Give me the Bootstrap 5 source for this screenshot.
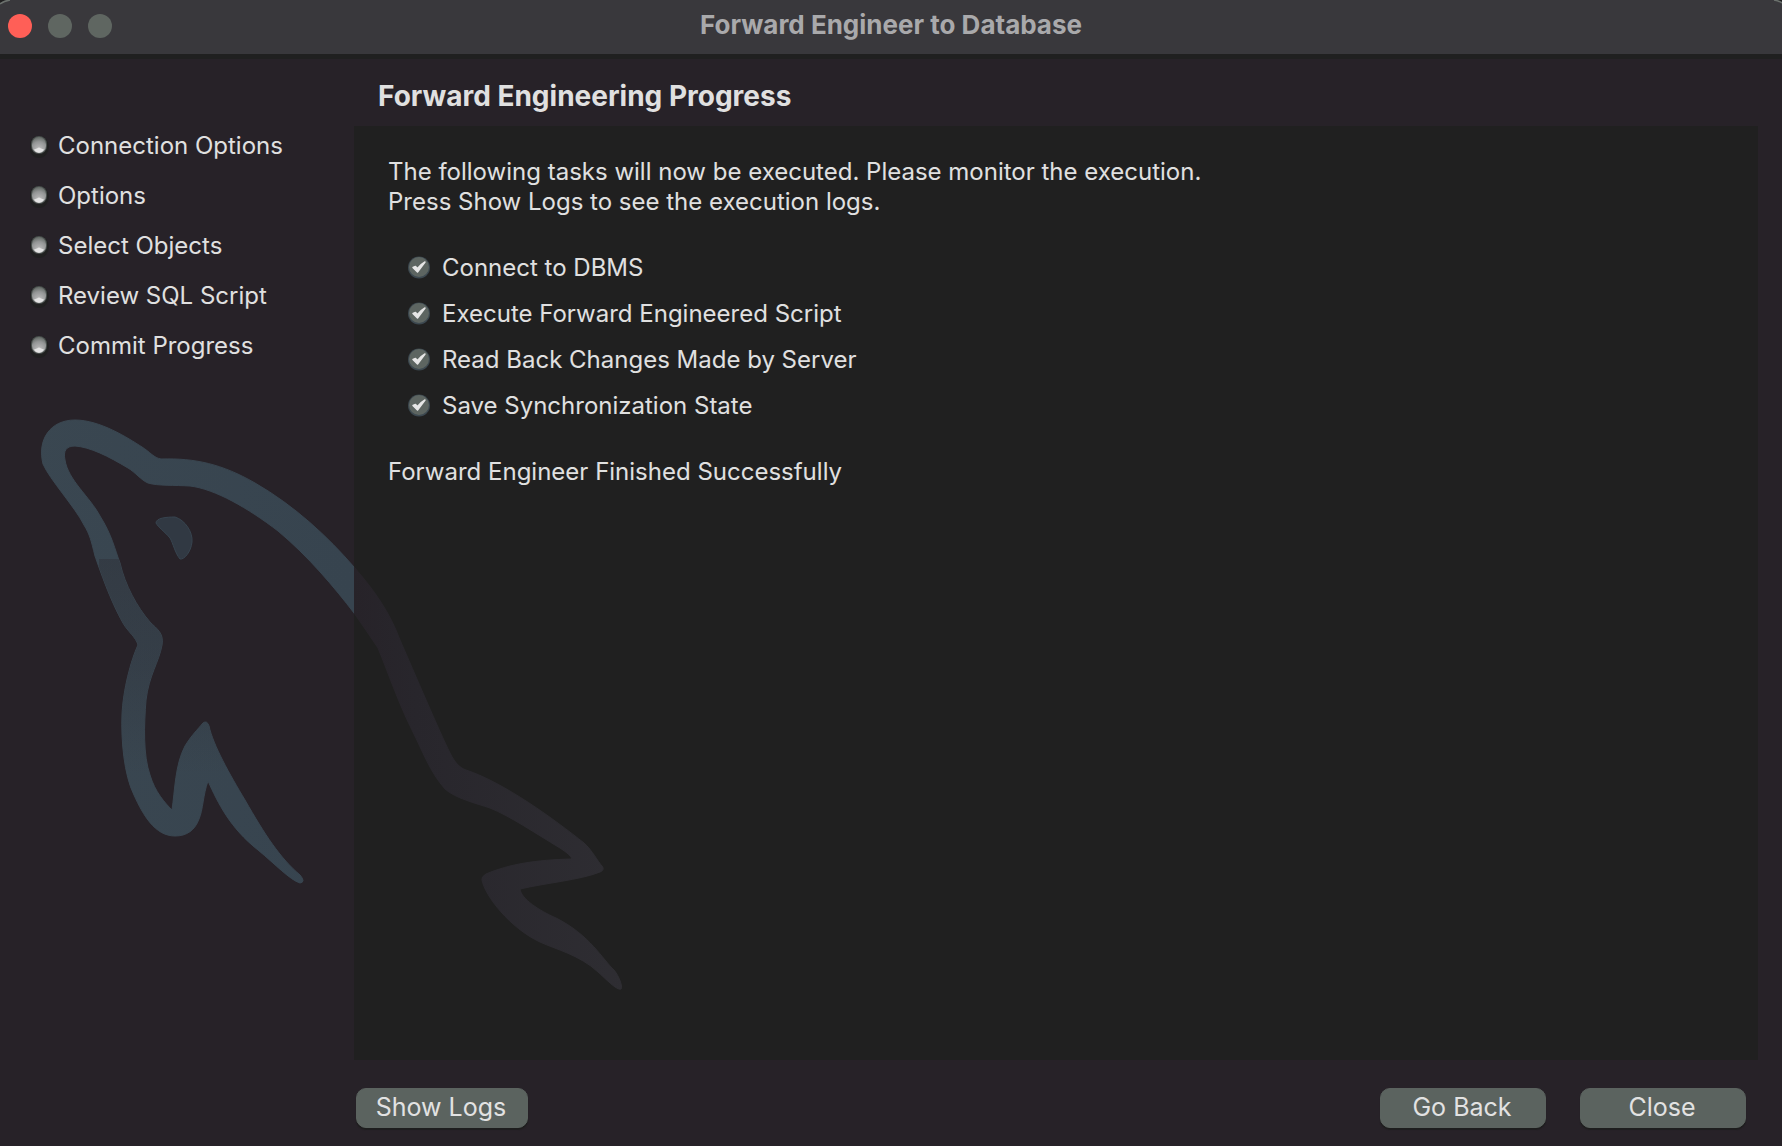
<!DOCTYPE html>
<html lang="en">
<head>
<meta charset="utf-8">
<meta name="viewport" content="width=device-width, initial-scale=1">
<title>Forward Engineer to Database</title>
<link href="https://cdn.jsdelivr.net/npm/bootstrap@5.3.0/dist/css/bootstrap.min.css" rel="stylesheet">
<style>
  body { background: #272228; color: #e0e0e0; font-family: Inter, "Liberation Sans", sans-serif; font-size: 24px; line-height: 30px; }
  .titlebar { height: 59px; background: #39383c; border-bottom: 5px solid #202020; padding: 0 8px 2px; gap: 16px; }
  .titlebar h1 { font-size: 26px; line-height: 30px; font-weight: 700; color: #a9a9ab; left: 0; right: 0; top: 10px; pointer-events: none; }
  .traffic { width: 24px; height: 24px; border: 0; padding: 0; border-radius: 50%; background: #5f6661; }
  .traffic-close { background: #ff5f57; }
  .corner { width: 12px; height: 5px; top: 0; }
  .steps { width: 354px; padding: 72px 16px 0 30px; }
  .steps ul { display: grid; gap: 20px; }
  .steps svg { width: 20px; height: 24px; margin-right: 8px; }
  .content-col { padding-right: 24px; }
  .page-title { font-size: 28px; line-height: 34px; font-weight: 700; margin: 20px 0 13px 24px; }
  .panel { background: #202020; padding: 31px 34px; }
  .panel p { margin: 0; }
  .panel ul { display: grid; gap: 16px; margin: 36px 0; padding-left: 19px; }
  .panel li svg { width: 24px; height: 24px; margin-right: 11px; }
  .dolphin { left: 0; top: 400px; width: 640px; height: 600px; pointer-events: none; }
  .actions { height: 86px; padding: 28px 12px 0 2px; gap: 34px; }
  .mac-btn { --bs-btn-color: #e2e2e2; --bs-btn-bg: #5b635f; --bs-btn-border-color: #5b635f; --bs-btn-hover-color: #fff; --bs-btn-hover-bg: #69716d; --bs-btn-hover-border-color: #69716d; --bs-btn-active-bg: #747c78; --bs-btn-active-color: #fff; width: 166px; height: 40px; padding: 0 2px 2px 0; border-radius: 10px; font-size: 25px; line-height: 34px; box-shadow: 0 2px 1px #1e1e1e; }
  .mac-btn-wide { width: 172px; }
</style>
<script src="https://cdn.jsdelivr.net/npm/bootstrap@5.3.0/dist/js/bootstrap.bundle.min.js"></script>
</head>
<body class="d-flex flex-column min-vh-100 position-relative">

<svg class="position-absolute" width="0" height="0" aria-hidden="true">
  <defs>
    <radialGradient id="knob" cx="50%" cy="85%" r="80%">
      <stop offset="0" stop-color="#e6e6e6"/><stop offset=".3" stop-color="#b0b0b0"/><stop offset=".7" stop-color="#949696"/><stop offset="1" stop-color="#6a706c"/>
    </radialGradient>
  </defs>
  <symbol id="step-dot" viewBox="0 0 20 24">
    <ellipse cx="9" cy="13" rx="10" ry="11" fill="#202020"/>
    <rect x="1" y="2" width="16" height="18" rx="8" fill="#4a504e"/>
    <rect x="2" y="3" width="14" height="16" rx="7" fill="url(#knob)"/>
    <path d="M4 15.500 7 14.500 9 13.500 11 14.500 14 15.500Q12.500 18.500 9 18.500T4 15.500Z" fill="#e4e4e4"/>
  </symbol>
  <symbol id="task-done" viewBox="0 0 24 24">
    <circle cx="12" cy="11.500" r="11" fill="#3c4850"/>
    <circle cx="12" cy="11" r="10" fill="#5d6561"/>
    <path d="M6 11.500 10.500 16 18 6Q13 9 10.500 12.500L8.500 10.500Z" fill="#e6e6e6" stroke="#e6e6e6" stroke-width="1.500" stroke-linejoin="round"/>
  </symbol>
</svg>

<header class="titlebar d-flex align-items-center position-relative">
  <button class="traffic traffic-close" type="button" aria-label="Close window"></button>
  <button class="traffic" type="button" aria-label="Minimize window"></button>
  <button class="traffic" type="button" aria-label="Zoom window"></button>
  <h1 class="position-absolute text-center m-0">Forward Engineer to Database</h1>
  <svg class="corner position-absolute start-0" viewBox="0 0 12 5" aria-hidden="true"><path d="M0 0H5L0 3Z" fill="#202020"/><path d="M0 4Q4 1 10 0" fill="none" stroke="#6b716d" stroke-width="1.500"/></svg>
  <svg class="corner position-absolute end-0" viewBox="0 0 12 5" aria-hidden="true"><path d="M12 0H8L12 2Z" fill="#202020"/><path d="M4 0Q9 1 12 3" fill="none" stroke="#6b716d" stroke-width="1.500"/></svg>
</header>

<div class="d-flex flex-grow-1">
  <nav class="steps flex-shrink-0" aria-label="Wizard steps">
    <ul class="list-unstyled m-0">
      <li class="d-flex align-items-center"><svg aria-hidden="true"><use href="#step-dot"/></svg>Connection Options</li>
      <li class="d-flex align-items-center"><svg aria-hidden="true"><use href="#step-dot"/></svg>Options</li>
      <li class="d-flex align-items-center"><svg aria-hidden="true"><use href="#step-dot"/></svg>Select Objects</li>
      <li class="d-flex align-items-center"><svg aria-hidden="true"><use href="#step-dot"/></svg>Review SQL Script</li>
      <li class="d-flex align-items-center"><svg aria-hidden="true"><use href="#step-dot"/></svg>Commit Progress</li>
    </ul>
  </nav>

  <main class="content-col flex-grow-1 d-flex flex-column">
    <h2 class="page-title">Forward Engineering Progress</h2>
    <section class="panel flex-grow-1">
      <p>The following tasks will now be executed. Please monitor the execution.<br>Press Show Logs to see the execution logs.</p>
      <ul class="list-unstyled">
        <li class="d-flex align-items-center"><svg aria-hidden="true"><use href="#task-done"/></svg>Connect to DBMS</li>
        <li class="d-flex align-items-center"><svg aria-hidden="true"><use href="#task-done"/></svg>Execute Forward Engineered Script</li>
        <li class="d-flex align-items-center"><svg aria-hidden="true"><use href="#task-done"/></svg>Read Back Changes Made by Server</li>
        <li class="d-flex align-items-center"><svg aria-hidden="true"><use href="#task-done"/></svg>Save Synchronization State</li>
      </ul>
      <p>Forward Engineer Finished Successfully</p>
    </section>
    <footer class="actions d-flex">
      <button class="btn mac-btn mac-btn-wide me-auto" type="button">Show Logs</button>
      <button class="btn mac-btn" type="button">Go Back</button>
      <button class="btn mac-btn" type="button">Close</button>
    </footer>
  </main>
</div>

<!-- Dolphin watermark: bright over the sidebar, faint over the panel -->
<svg class="dolphin position-absolute" viewBox="0 400 640 600" aria-hidden="true">
  <defs>
    <linearGradient id="skin" gradientUnits="userSpaceOnUse" x1="0" y1="0" x2="640" y2="0">
      <stop offset="0" stop-color="#3a4751"/><stop offset=".553125" stop-color="#37444f"/>
      <stop offset=".553125" stop-color="#272329"/><stop offset=".65" stop-color="#28262c"/><stop offset="1" stop-color="#2f2e33"/>
    </linearGradient>
    <linearGradient id="shade" gradientUnits="userSpaceOnUse" x1="0" y1="558" x2="0" y2="775">
      <stop offset="0" stop-color="#272228" stop-opacity=".3"/><stop offset=".5" stop-color="#272228" stop-opacity=".2"/><stop offset="1" stop-color="#272228" stop-opacity="0"/>
    </linearGradient>
    <clipPath id="jaw"><rect x="99" y="559" width="126" height="216"/></clipPath>
    <path id="body" d="M75 420C100 420 128 438 142 447C150 452 154 458 161 459C195 458 222 464 255 483C295 506 328 537 354 567C375 591 390 613 400 640C414 672 440 733 450 753C455 763 460 768 466 770C505 783 555 820 584 843C592 850 598 862 602 866Q605 870 600 872C580 880 545 883 520 889C521 899 540 911 556 918C590 935 603 960 614 970C619 976 623 987 621 989C617 991 605 978 598 972C580 955 555 949 540 942C510 928 485 896 482 880Q481 877 486 874C510 864 535 860 572 859Q571 855 560 848C535 833 510 816 490 808C475 803 455 798 445 789C430 772 423 752 412 730C398 702 388 672 378 648Q366 630 354 613C335 588 308 556 278 531C248 508 215 489 190 486C175 485 158 486 148 483C141 480 135 472 128 468C108 456 90 447 75 446C66 446 63 451 65 460C68 480 90 497 100 516C112 535 115 550 120 563C125 585 137 607 150 622C157 629 164 633 162 645C159 662 149 675 146 700C144 725 143 755 150 775C155 792 165 803 172 810C175 790 175 765 185 746C191 736 198 729 203 723Q207 720 209 726C213 745 230 775 245 800C265 835 280 858 300 875Q306 882 300 883C290 880 275 864 258 850C230 828 218 803 208 781C203 795 203 810 199 819C195 830 187 836 175 836C155 836 143 815 134 795C124 775 121 740 122 715C123 690 131 660 138 645C136 637 128 632 123 623C110 600 100 570 95 556C91 540 90 535 84 525C75 507 50 480 43 464C37 440 50 420 75 420Z"/>
  </defs>
  <use href="#body" fill="url(#skin)" stroke="url(#skin)" stroke-width="1"/>
  <use href="#body" fill="url(#shade)" clip-path="url(#jaw)"/>
  <path d="M156 523C156 518 166 517 175 517C185 520 193 532 192 542C191 552 184 560 180 559C175 553 173 543 170 538C165 532 158 527 156 523Z" fill="#313943" stroke="#37444f" stroke-width="1"/>
</svg>
</body>
</html>
